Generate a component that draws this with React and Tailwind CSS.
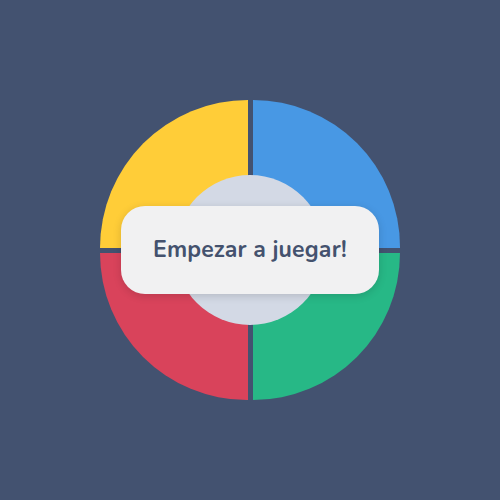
const quadrants = [
  { key: 'yellow', className: 'bg-[#ffcd38] rounded-tl-[150px]' },
  { key: 'blue', className: 'bg-[#4898e4] rounded-tr-[150px]' },
  { key: 'red', className: 'bg-[#d9435b] rounded-bl-[150px]' },
  { key: 'green', className: 'bg-[#27b886] rounded-br-[150px]' },
];

const App = () => {
  return (
    <div className="w-[500px] h-[500px] bg-[#435270] flex items-center justify-center font-['Nunito','Open_Sans',sans-serif]">
      <div className="relative w-[300px] h-[300px]">
        {/* Board */}
        <div className="grid grid-cols-2 grid-rows-2 gap-[5px] w-full h-full">
          {quadrants.map((q) => (
            <div key={q.key} className={q.className} />
          ))}
        </div>

        {/* Center */}
        <div className="absolute inset-0 flex items-center justify-center">
          <div className="w-[150px] h-[150px] rounded-full bg-[#d3d9e5]" />
        </div>

        <div className="absolute inset-0 flex items-center justify-center">
          <button className="w-[258px] h-[88px] rounded-[24px] bg-[#f1f1f2] shadow-[0_2px_8px_rgba(0,0,0,0.15)] text-[23px] font-bold text-[#44526e] tracking-[0.2px]">
            Empezar a juegar!
          </button>
        </div>
      </div>
    </div>
  );
};

export default App;
